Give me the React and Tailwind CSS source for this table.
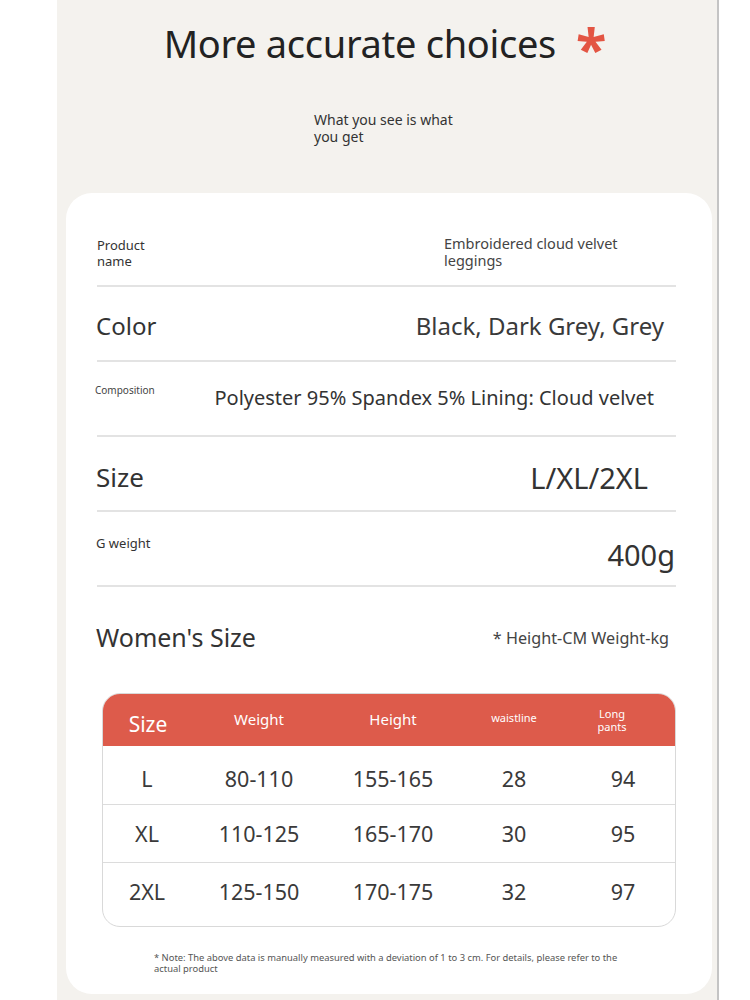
import React from "react";

const font = { fontFamily: '"Noto Sans", "Liberation Sans", sans-serif' };

const rows = [
  { size: "L", weight: "80-110", height: "155-165", waist: "28", pants: "94" },
  { size: "XL", weight: "110-125", height: "165-170", waist: "30", pants: "95" },
  { size: "2XL", weight: "125-150", height: "170-175", waist: "32", pants: "97" },
];

const cols = "grid grid-cols-[88px_136px_132px_110px_108px]";

const SizeTable = () => (
  <div className="mt-[36px] ml-[6px] w-[574px] rounded-[18px] border border-[#d9d9d9] overflow-hidden bg-white">
    <div className={`${cols} h-[52px] items-center bg-[#dd5b4b] text-white`}>
      <div className="text-[21px] text-center pl-[2px] mt-[10px]">Size</div>
      <div className="text-[15px] text-center">Weight</div>
      <div className="text-[15px] text-center">Height</div>
      <div className="text-[11px] text-center -mt-[2px]">waistline</div>
      <div className="text-[11px] leading-[13px] text-center pr-[22px]">
        Long
        <br />
        pants
      </div>
    </div>
    {rows.map((r, i) => (
      <div
        key={r.size}
        className={`${cols} items-center text-[21.5px] text-[#3a3a3a] ${
          i === 0 ? "h-[59px] pt-[9px] border-b border-[#dcdcdc]" : i === 1 ? "h-[58px] pt-[3px] border-b border-[#dcdcdc]" : "h-[63px] pb-[4px]"
        }`}
      >
        <div className="text-center">{r.size}</div>
        <div className="text-center">{r.weight}</div>
        <div className="text-center">{r.height}</div>
        <div className="text-center">{r.waist}</div>
        <div className="text-center">{r.pants}</div>
      </div>
    ))}
  </div>
);

export default function App() {
  return (
    <div className="w-[750px] h-[1000px] bg-white flex overflow-hidden" style={font}>
      <div className="w-[57px] shrink-0" />
      <div className="w-[662px] shrink-0 bg-[#f4f2ee] border-r-2 border-[#c4c4c4] flex flex-col">
        {/* heading */}
        <div className="h-[193px] flex flex-col items-center">
          <div className="mt-[17px] flex items-start text-[#222] -ml-[4px]">
            <span className="text-[38px] leading-[52px] tracking-[-0.3px]">More accurate choices</span>
            <span className="ml-[20px] text-[#e35543] text-[56px] leading-[52px] font-bold mt-[4px]">*</span>
          </div>
          <div className="mt-[38px] w-[160px] ml-[14px] text-[14px] leading-[17px] text-[#333]">
            What you see is what you get
          </div>
        </div>

        {/* card */}
        <div className="ml-[9px] w-[646px] flex-1 bg-white rounded-[26px] mb-[6px] pl-[30px] pr-[36px]">
          <div className="h-[94px] flex border-b-2 border-[#e3e3e3] ml-[1px]">
            <div className="pt-[44px] text-[13px] leading-[16px] text-[#333] w-[80px]">Product name</div>
            <div className="pt-[42px] ml-[267px] text-[14.5px] leading-[17px] text-[#444] w-[195px]">
              Embroidered cloud velvet leggings
            </div>
          </div>

          <div className="h-[75px] flex items-center justify-between border-b-2 border-[#e3e3e3] ml-[1px] pr-[12px] pt-[4px]">
            <div className="text-[24px] text-[#333] -ml-[1px]">Color</div>
            <div className="text-[24px] text-[#3a3a3a]">Black, Dark Grey, Grey</div>
          </div>

          <div className="h-[75px] flex items-center justify-between border-b-2 border-[#e3e3e3] ml-[1px] pr-[22px]">
            <div className="self-start pt-[21px] text-[10px] text-[#444] -ml-[2px]">Composition</div>
            <div className="text-[20px] text-[#333] -mt-[2px]">Polyester 95% Spandex 5% Lining: Cloud velvet</div>
          </div>

          <div className="h-[75px] flex items-center justify-between border-b-2 border-[#e3e3e3] ml-[1px] pr-[28px] pt-[8px]">
            <div className="text-[26px] text-[#333] -ml-[1px]">Size</div>
            <div className="text-[29px] text-[#333]">L/XL/2XL</div>
          </div>

          <div className="h-[75px] flex items-center justify-between border-b-2 border-[#e3e3e3] ml-[1px] pr-[1px]">
            <div className="self-start pt-[22px] text-[13px] text-[#333] -ml-[1px]">G weight</div>
            <div className="text-[29px] text-[#333] pt-[12px]">400g</div>
          </div>

          <div className="flex items-center justify-between pt-[32px] pr-[7px]">
            <div className="text-[25px] text-[#333]">Women's Size</div>
            <div className="text-[16.2px] text-[#444]">* Height-CM Weight-kg</div>
          </div>

          <SizeTable />

          <div className="mt-[25px] ml-[58px] w-[470px] text-[9.4px] leading-[11px] text-[#555]">
            * Note: The above data is manually measured with a deviation of 1 to 3 cm. For details, please refer to the actual product
          </div>
        </div>
      </div>
      <div className="flex-1" />
    </div>
  );
}
